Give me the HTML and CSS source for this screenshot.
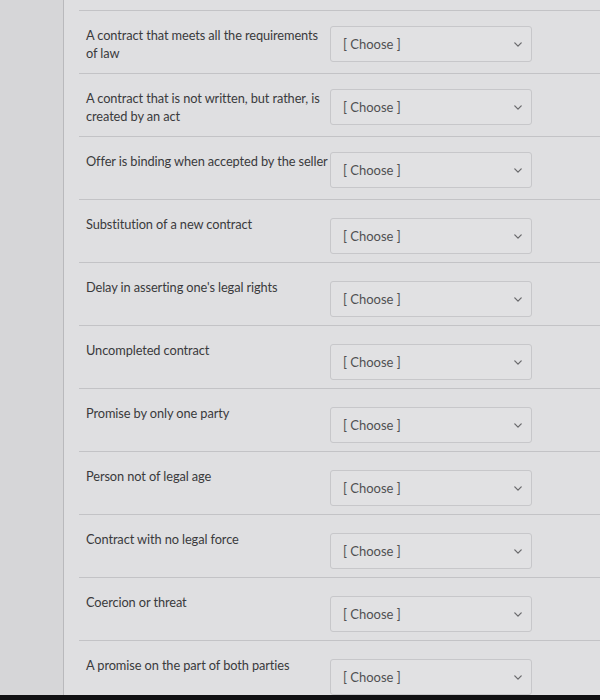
FILE: index.html
```html
<!DOCTYPE html>
<html lang="en">
<head>
<meta charset="utf-8">
<title>Matching</title>
<link rel="stylesheet" href="styles.css">
</head>
<body>
<div class="screen">
  <div class="main">
    <div class="sidebar"></div>
    <div class="panel">
      <div class="row"><div class="label">A contract that meets all the requirements of law</div><div class="select"><span>[ Choose ]</span><svg class="chev" viewBox="0 0 10 6"><path d="M1 1l4 4 4-4"/></svg></div></div>
      <div class="row"><div class="label">A contract that is not written, but rather, is created by an act</div><div class="select"><span>[ Choose ]</span><svg class="chev" viewBox="0 0 10 6"><path d="M1 1l4 4 4-4"/></svg></div></div>
      <div class="row"><div class="label">Offer is binding when accepted by the seller</div><div class="select"><span>[ Choose ]</span><svg class="chev" viewBox="0 0 10 6"><path d="M1 1l4 4 4-4"/></svg></div></div>
      <div class="row"><div class="label">Substitution of a new contract</div><div class="select low"><span>[ Choose ]</span><svg class="chev" viewBox="0 0 10 6"><path d="M1 1l4 4 4-4"/></svg></div></div>
      <div class="row"><div class="label">Delay in asserting one's legal rights</div><div class="select low"><span>[ Choose ]</span><svg class="chev" viewBox="0 0 10 6"><path d="M1 1l4 4 4-4"/></svg></div></div>
      <div class="row"><div class="label">Uncompleted contract</div><div class="select low"><span>[ Choose ]</span><svg class="chev" viewBox="0 0 10 6"><path d="M1 1l4 4 4-4"/></svg></div></div>
      <div class="row"><div class="label">Promise by only one party</div><div class="select low"><span>[ Choose ]</span><svg class="chev" viewBox="0 0 10 6"><path d="M1 1l4 4 4-4"/></svg></div></div>
      <div class="row"><div class="label">Person not of legal age</div><div class="select low"><span>[ Choose ]</span><svg class="chev" viewBox="0 0 10 6"><path d="M1 1l4 4 4-4"/></svg></div></div>
      <div class="row"><div class="label">Contract with no legal force</div><div class="select low"><span>[ Choose ]</span><svg class="chev" viewBox="0 0 10 6"><path d="M1 1l4 4 4-4"/></svg></div></div>
      <div class="row"><div class="label">Coercion or threat</div><div class="select low"><span>[ Choose ]</span><svg class="chev" viewBox="0 0 10 6"><path d="M1 1l4 4 4-4"/></svg></div></div>
      <div class="row"><div class="label">A promise on the part of both parties</div><div class="select low"><span>[ Choose ]</span><svg class="chev" viewBox="0 0 10 6"><path d="M1 1l4 4 4-4"/></svg></div></div>
    </div>
  </div>
  <div class="bezel"></div>
</div>
</body>
</html>
```
FILE: styles.css
```css
html, body {
  margin: 0;
  padding: 0;
}
body {
  background: #d8d8da;
  font-family: Lato, "Open Sans", sans-serif;
  color: #3a3a3c;
}
.screen {
  height: 700px;
  display: flex;
  flex-direction: column;
}
.main {
  flex: 1;
  display: flex;
  overflow: hidden;
}
.sidebar {
  width: 63px;
  flex: none;
  background: #d6d6d8;
  border-right: 1px solid #b9b9bc;
}
.panel {
  flex: 1;
  background: #dfdfe1;
  padding: 10px 0 0 15px;
}
.row {
  box-sizing: border-box;
  height: 63px;
  border-top: 1px solid #c3c3c6;
  display: flex;
  align-items: flex-start;
  padding-top: 15px;
}
.label {
  width: 251px;
  flex: none;
  box-sizing: border-box;
  padding-left: 7px;
  padding-right: 2px;
  font-size: 12.8px;
  line-height: 18px;
  letter-spacing: -0.1px;
}
.select {
  box-sizing: border-box;
  width: 202px;
  height: 36px;
  border: 1px solid #c7c7ca;
  border-radius: 3px;
  background: #e1e1e3;
  display: flex;
  align-items: center;
  justify-content: space-between;
  padding: 0 9px 0 12px;
  font-size: 13px;
  color: #505052;
}
.select.low {
  margin-top: 3px;
}
.chev {
  width: 8px;
  height: 5px;
  fill: none;
  stroke: #6a6a6d;
  stroke-width: 1.6;
  stroke-linecap: round;
  stroke-linejoin: round;
}
.bezel {
  height: 5px;
  flex: none;
  background: #111113;
}
```
